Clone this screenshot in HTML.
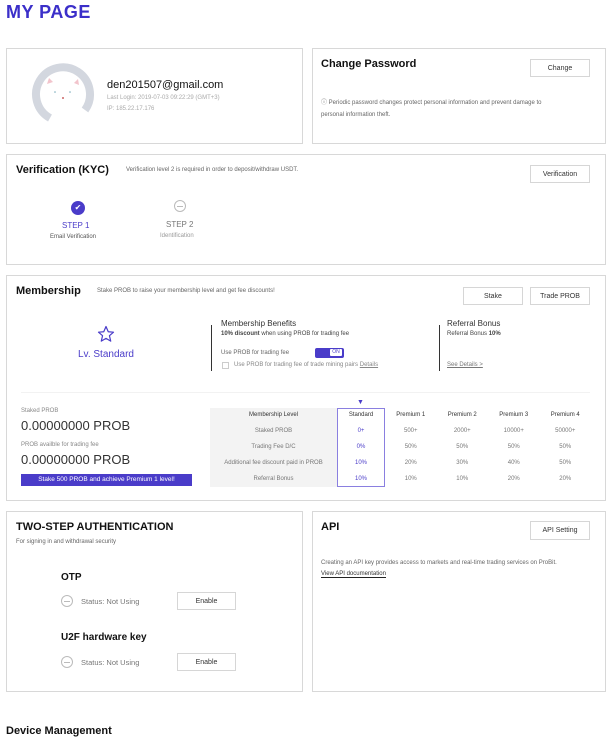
<!DOCTYPE html>
<html><head><meta charset="utf-8"><style>
*{box-sizing:border-box;margin:0;padding:0}
body{width:611px;height:746px;background:#fff;font-family:"Liberation Sans",sans-serif;color:#222;position:relative;overflow:hidden}
.a{position:absolute;white-space:nowrap}
.box{position:absolute;border:1px solid #d8d8d8;background:#fff}
.btn{position:absolute;border:1px solid #d6d6d6;background:#fff;font-size:7px;color:#333;display:flex;align-items:center;justify-content:center}
.h{font-size:11px;font-weight:bold;color:#111}
.s{font-size:6px;color:#666}
table{border-collapse:collapse;font-size:6px;position:absolute;left:210px;top:408px;width:381px;height:79px}
td{height:15.8px;line-height:15px;padding:0;text-align:center;color:#777}
td.l{background:#f3f3f3;width:127px;color:#777}
tr.hd td{color:#333}
.st{color:#4a3cc9}
</style></head><body>
<div class="a" style="left:6px;top:2px;font-size:18px;font-weight:bold;color:#3b2fc9;letter-spacing:0.5px">MY PAGE</div>

<div class="box" style="left:6px;top:48px;width:297px;height:96px"></div>
<svg class="a" style="left:30px;top:62px" width="66" height="66" viewBox="0 0 66 66">
<path d="M55 48 A27 27 0 1 0 20 56" fill="none" stroke="#d3d7df" stroke-width="8"/>
<circle cx="32" cy="33" r="21" fill="#fff"/>
<path d="M17 22 l2 -6 4 4z" fill="#f2c4cc"/><path d="M44 21 l4 -4 1 6z" fill="#f2c4cc"/>
<circle cx="25" cy="30" r="0.8" fill="#7ab"/><circle cx="40" cy="30" r="0.8" fill="#7ab"/>
<circle cx="33" cy="36" r="1" fill="#c66"/>
</svg>
<div class="a" style="left:107px;top:79px;font-size:11px;color:#111">den201507@gmail.com</div>
<div class="a s" style="left:107px;top:95px;color:#aaa">Last Login: 2019-07-03 09:22:29 (GMT+3)</div>
<div class="a s" style="left:107px;top:106px;color:#aaa">IP: 185.22.17.176</div>

<div class="box" style="left:312px;top:48px;width:294px;height:96px"></div>
<div class="a h" style="left:321px;top:58px">Change Password</div>
<div class="btn" style="left:530px;top:59px;width:60px;height:18px">Change</div>
<div class="a s" style="left:321px;top:97px;line-height:12px">ⓘ Periodic password changes protect personal information and prevent damage to<br>personal information theft.</div>

<div class="box" style="left:6px;top:154px;width:600px;height:111px"></div>
<div class="a h" style="left:16px;top:164px">Verification (KYC)</div>
<div class="a s" style="left:126px;top:167px">Verification level 2 is required in order to deposit/withdraw USDT.</div>
<div class="btn" style="left:530px;top:165px;width:60px;height:18px">Verification</div>
<div class="a" style="left:71px;top:201px;width:14px;height:14px;border-radius:50%;background:#4a3cc9;color:#fff;font-size:8px;text-align:center;line-height:14px">✔</div>
<div class="a" style="left:62px;top:221px;font-size:8px;color:#4a3cc9">STEP 1</div>
<div class="a s" style="left:50px;top:234px;color:#555">Email Verification</div>
<div class="a" style="left:174px;top:200px;width:12px;height:12px;border-radius:50%;border:1px solid #bbb"><div style="position:absolute;left:2px;top:5px;width:6px;height:1px;background:#bbb"></div></div>
<div class="a" style="left:166px;top:220px;font-size:8px;color:#777">STEP 2</div>
<div class="a s" style="left:160px;top:233px;color:#999">Identification</div>

<div class="box" style="left:6px;top:275px;width:600px;height:226px"></div>
<div class="a h" style="left:16px;top:285px">Membership</div>
<div class="a s" style="left:97px;top:288px">Stake PROB to raise your membership level and get fee discounts!</div>
<div class="btn" style="left:463px;top:287px;width:60px;height:18px">Stake</div>
<div class="btn" style="left:530px;top:287px;width:60px;height:18px">Trade PROB</div>
<svg class="a" style="left:97px;top:325px" width="18" height="18" viewBox="0 0 24 24"><path d="M12 2l3 7 7 .6-5.4 4.7 1.7 7.2L12 17.8 5.7 21.5l1.7-7.2L2 9.6 9 9z" fill="none" stroke="#4a3cc9" stroke-width="1.6" stroke-linejoin="round"/></svg>
<div class="a" style="left:78px;top:349px;font-size:10px;color:#4a3cc9">Lv. Standard</div>
<div class="a" style="left:211px;top:325px;width:1px;height:46px;background:#333"></div>
<div class="a" style="left:439px;top:325px;width:1px;height:46px;background:#333"></div>
<div class="a" style="left:221px;top:319px;font-size:8px;color:#333">Membership Benefits</div>
<div class="a s" style="left:221px;top:331px;color:#444"><b>10% discount</b> when using PROB for trading fee</div>
<div class="a s" style="left:221px;top:350px">Use PROB for trading fee</div>
<div class="a" style="left:315px;top:348px;width:29px;height:10px;border-radius:2px;background:#4a3cc9"><div style="position:absolute;right:2px;top:1px;width:12px;height:7px;background:#fff;border-radius:1px;font-size:5px;color:#4a3cc9;text-align:center;line-height:7px">ON</div></div>
<div class="a" style="left:222px;top:362px;width:7px;height:7px;border:1px solid #ccc"></div>
<div class="a s" style="left:234px;top:362px;color:#888">Use PROB for trading fee of trade mining pairs <u>Details</u></div>
<div class="a" style="left:447px;top:319px;font-size:8px;color:#333">Referral Bonus</div>
<div class="a s" style="left:447px;top:331px;color:#444">Referral Bonus <b>10%</b></div>
<div class="a s" style="left:447px;top:362px;color:#777"><u>See Details &gt;</u></div>
<div class="a" style="left:21px;top:392px;width:569px;height:1px;background:#f2f2f2"></div>
<div class="a s" style="left:21px;top:408px;color:#888">Staked PROB</div>
<div class="a" style="left:21px;top:418px;font-size:13px;color:#333">0.00000000 PROB</div>
<div class="a s" style="left:21px;top:442px;color:#888">PROB availble for trading fee</div>
<div class="a" style="left:21px;top:452px;font-size:13px;color:#333">0.00000000 PROB</div>
<div class="a" style="left:21px;top:474px;width:171px;height:12px;background:#4a3cc9;color:#fff;font-size:6.5px;text-align:center;line-height:12px">Stake 500 PROB and achieve Premium 1 level!</div>
<div class="a" style="left:357px;top:399px;font-size:7px;color:#4a3cc9">▼</div>
<table>
<tr class="hd"><td class="l">Membership Level</td><td class="st" style="width:48px">Standard</td><td>Premium 1</td><td>Premium 2</td><td>Premium 3</td><td>Premium 4</td></tr>
<tr><td class="l">Staked PROB</td><td class="st">0+</td><td>500+</td><td>2000+</td><td>10000+</td><td>50000+</td></tr>
<tr><td class="l">Trading Fee D/C</td><td class="st">0%</td><td>50%</td><td>50%</td><td>50%</td><td>50%</td></tr>
<tr><td class="l">Additional fee discount paid in PROB</td><td class="st">10%</td><td>20%</td><td>30%</td><td>40%</td><td>50%</td></tr>
<tr><td class="l">Referral Bonus</td><td class="st">10%</td><td>10%</td><td>10%</td><td>20%</td><td>20%</td></tr>
</table>
<div class="a" style="left:337px;top:408px;width:48px;height:79px;border:1px solid #8a7fe0"></div>

<div class="box" style="left:6px;top:511px;width:297px;height:181px"></div>
<div class="a h" style="left:16px;top:521px">TWO-STEP AUTHENTICATION</div>
<div class="a s" style="left:16px;top:539px">For signing in and withdrawal security</div>
<div class="a" style="left:61px;top:572px;font-size:10px;font-weight:bold;color:#111">OTP</div>
<div class="a" style="left:61px;top:595px;width:12px;height:12px;border-radius:50%;border:1px solid #bbb"><div style="position:absolute;left:2px;top:5px;width:6px;height:1px;background:#bbb"></div></div>
<div class="a" style="left:81px;top:597px;font-size:7.5px;color:#777">Status: Not Using</div>
<div class="btn" style="left:177px;top:592px;width:59px;height:18px">Enable</div>
<div class="a" style="left:61px;top:632px;font-size:10px;font-weight:bold;color:#111">U2F hardware key</div>
<div class="a" style="left:61px;top:656px;width:12px;height:12px;border-radius:50%;border:1px solid #bbb"><div style="position:absolute;left:2px;top:5px;width:6px;height:1px;background:#bbb"></div></div>
<div class="a" style="left:81px;top:658px;font-size:7.5px;color:#777">Status: Not Using</div>
<div class="btn" style="left:177px;top:653px;width:59px;height:18px">Enable</div>

<div class="box" style="left:312px;top:511px;width:294px;height:181px"></div>
<div class="a h" style="left:321px;top:521px">API</div>
<div class="btn" style="left:530px;top:521px;width:60px;height:19px">API Setting</div>
<div class="a s" style="left:321px;top:560px">Creating an API key provides access to markets and real-time trading services on ProBit.</div>
<div class="a s" style="left:321px;top:571px;color:#333;border-bottom:1px solid #222">View API documentation</div>

<div class="a" style="left:6px;top:725px;font-size:11px;font-weight:bold;color:#111">Device Management</div>
</body></html>
